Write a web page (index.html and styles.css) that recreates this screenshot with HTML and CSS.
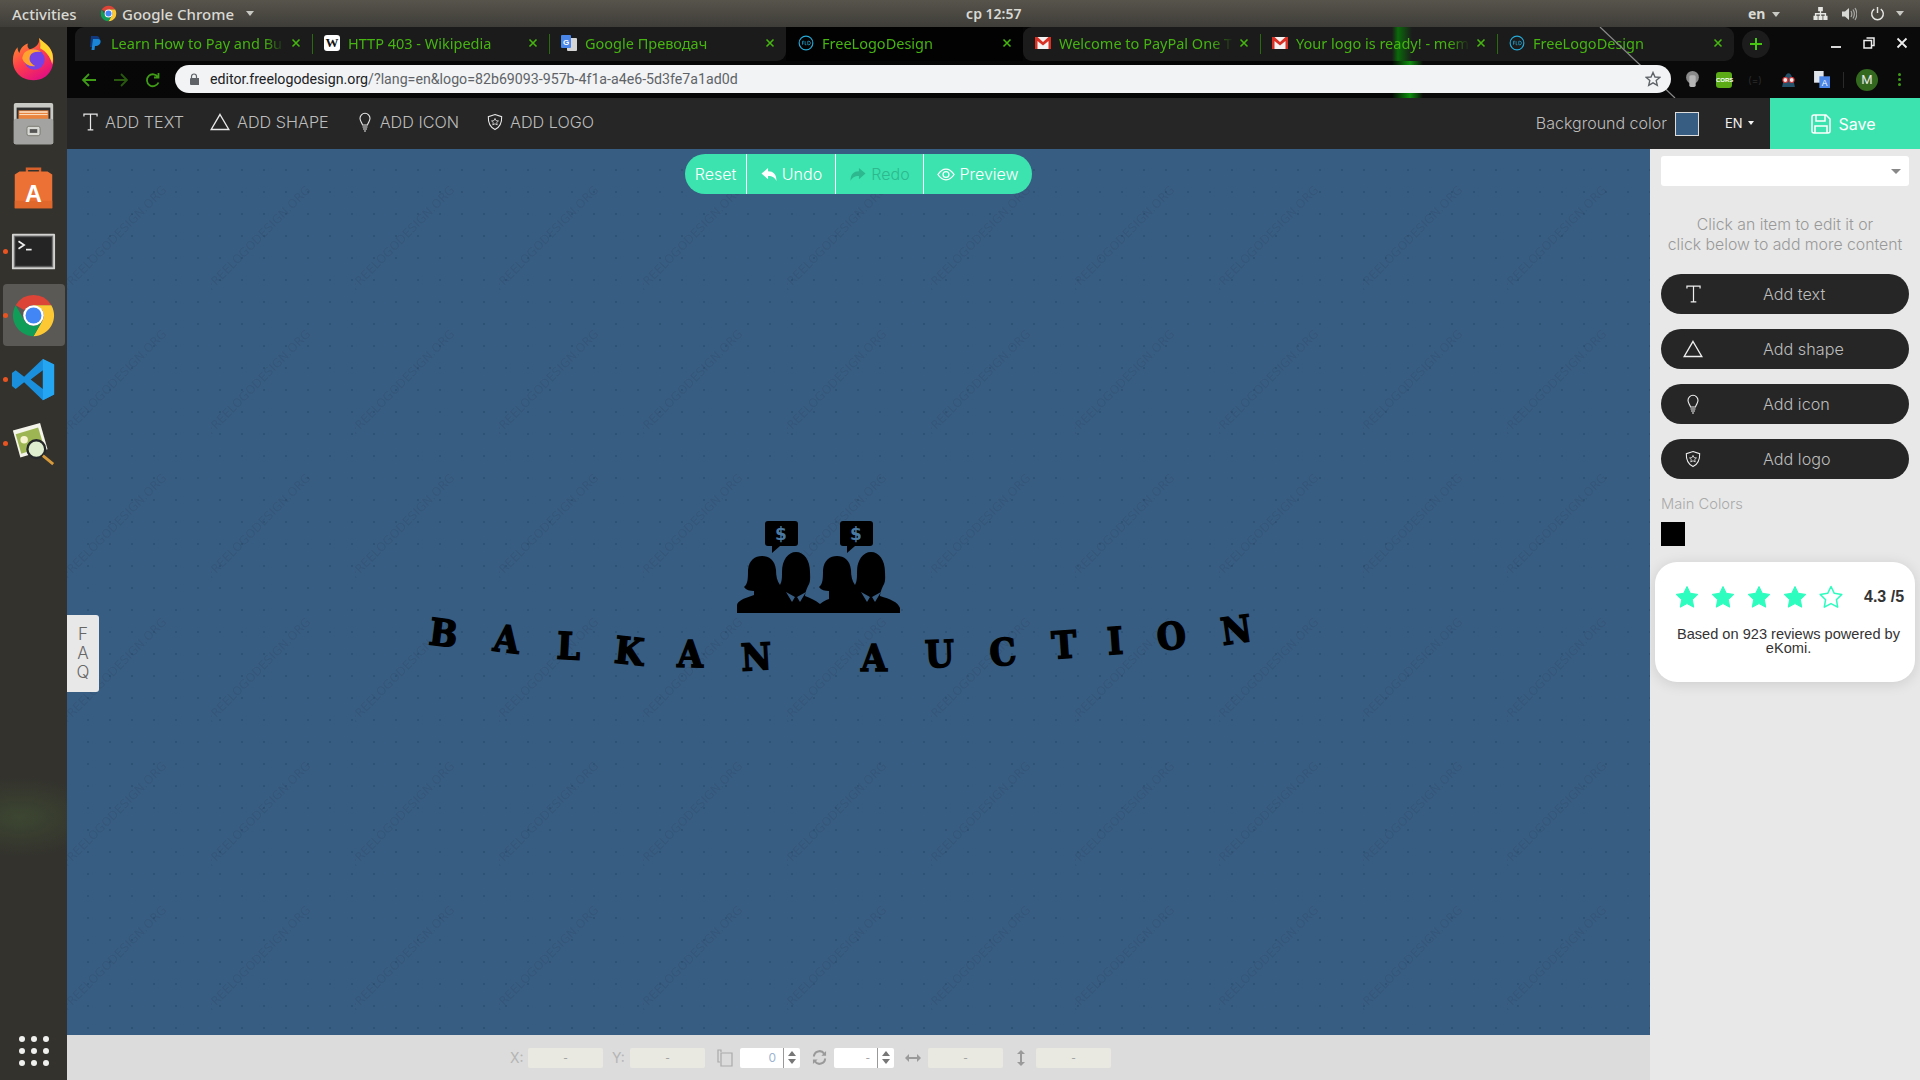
FILE: index.html
```html
<!DOCTYPE html>
<html lang="en">
<head>
<meta charset="utf-8">
<title>FreeLogoDesign</title>
<link rel="stylesheet" href="styles.css">
</head>
<body>
<svg class="sprite" aria-hidden="true">
  <symbol id="chrome" viewBox="0 0 48 48">
    <path fill="#db4437" d="M24 2A22 22 0 0 1 43 13L24 13A11 11 0 0 0 14.500 18.500L5 13A22 22 0 0 1 24 2Z"/>
    <path fill="#fcc934" d="M43 13A22 22 0 0 1 24 46L33.500 29.500A11 11 0 0 0 33.500 18.500L24 13Z"/>
    <path fill="#0f9d58" d="M5 13A22 22 0 0 0 24 46L33.500 29.500A11 11 0 0 1 14.500 29.500Z"/>
    <circle cx="24" cy="24" r="11" fill="#fff"/><circle cx="24" cy="24" r="8.500" fill="#4285f4"/>
  </symbol>
  <symbol id="x" viewBox="0 0 10 10"><path d="M1.500 1.500L8.500 8.500M8.500 1.500L1.500 8.500" stroke="#46b511" stroke-width="1.600" fill="none"/></symbol>
  <symbol id="fld" viewBox="0 0 18 18"><circle cx="9" cy="9" r="7.700" fill="none" stroke="#25a9d6" stroke-width="1.300"/><path d="M5 7v4M5 7h2M5 9h1.500M8 7v4h1.500M11 7v4h1a2 2 0 0 0 0-4Z" fill="none" stroke="#25a9d6" stroke-width=".8"/></symbol>
  <symbol id="gmail" viewBox="0 0 16 16"><rect y="2" width="16" height="12" fill="#f2f2f2"/><path d="M0 2h2.500L8 7l5.500-5H16v12h-2.500V6L8 10.500 2.500 6v8H0Z" fill="#d93025"/></symbol>
  <symbol id="ti-t" viewBox="0 0 16 20"><path d="M1 4V1.500H15V4M8 1.500V18.500M5 18.500H11" fill="none" stroke="currentColor" stroke-width="1.300"/></symbol>
  <symbol id="ti-s" viewBox="0 0 20 18"><path d="M10 1.500L18.800 16.500H1.200Z" fill="none" stroke="currentColor" stroke-width="1.400"/></symbol>
  <symbol id="ti-b" viewBox="0 0 12 20"><path d="M3.500 13C3 10.500 1 9.500 1 6.300A5 5 0 0 1 11 6.300C11 9.500 9 10.500 8.500 13ZM3.500 15H8.500M4 17H8M5 19H7" fill="none" stroke="currentColor" stroke-width="1.100"/></symbol>
  <symbol id="ti-l" viewBox="0 0 18 20"><path d="M9 1.500L16.500 4C16.800 11 14 16 9 18.500C4 16 1.200 11 1.500 4Z" fill="none" stroke="currentColor" stroke-width="1.200"/><path d="M9 6l1.200 2.500 2.700.3-2 1.800.6 2.700L9 12l-2.500 1.300.6-2.700-2-1.800 2.700-.3Z" fill="none" stroke="currentColor" stroke-width=".9"/></symbol>
  <symbol id="star" viewBox="0 0 26 26"><path d="M13 2.500L16.300 9.300 23.800 10.400 18.400 15.700 19.700 23.200 13 19.600 6.300 23.200 7.600 15.700 2.200 10.400 9.700 9.300Z" stroke-linejoin="round"/></symbol>
</svg>

<header class="topbar">
  <span class="activities">Activities</span>
  <span class="appmenu"><svg class="ic16" aria-hidden="true"><use href="#chrome"/></svg>Google Chrome<i class="caret"></i></span>
  <span class="clock">ср 12:57</span>
  <span class="status">
    <span class="lang">en<i class="caret"></i></span>
    <svg class="net" viewBox="0 0 16 16"><path d="M5.500 1h5v4.500h-1.800V7.500H14v3h1.500V15h-4.500v-4.500h1.500V9H8.700v1.500h1.500V15H5.800v-4.500h1.500V9H3.500v1.500H5V15H.5v-4.500H2v-3h5.300V5.500H5.500Z" fill="#e6e6e3"/></svg>
    <svg class="vol" viewBox="0 0 16 16"><path d="M1 5.500h3L8 2v12L4 10.500H1Z" fill="#d8d8d5"/><path d="M10 5c1 1.800 1 4.200 0 6M12 3.500c1.700 2.800 1.700 6.200 0 9M14 2c2.300 3.700 2.300 8.300 0 12" stroke="#a8a8a5" stroke-width="1.200" fill="none"/></svg>
    <svg class="pow" viewBox="0 0 16 16"><path d="M8 1v6.500M4.500 3.300a6.200 6.200 0 1 0 7 0" stroke="#e6e6e3" stroke-width="1.500" fill="none"/></svg>
    <i class="caret last"></i>
  </span>
</header>

<div class="desktop">
  <nav class="dock">
    <div class="dock-item">
      <svg class="dock-ic" viewBox="0 0 48 48">
        <defs><linearGradient id="ffg" x1="0" y1="0" x2=".6" y2="1"><stop offset="0" stop-color="#ffa126"/><stop offset=".55" stop-color="#ff3f4a"/><stop offset="1" stop-color="#e3127e"/></linearGradient></defs>
        <path d="M30 1c3 4 11 7 14 16 4 12-2 29-20 29C10 46 2 36 2 25c0-6 2-11 5-14 0 3 1 5 2 6 1-5 5-9 9-10-1 3 0 5 2 6 5-1 11-5 10-12Z" fill="url(#ffg)"/>
        <path d="M30 1c3 4 11 7 14 16 1 4 1 8 0 12-2-8-7-14-13-17 1-4 0-8-1-11Z" fill="#ffd52e"/>
        <circle cx="25" cy="24" r="11" fill="#7542e5"/>
        <path d="M14 17c5-5 14-5 18-1-6-1-10 1-11 3-3 5 0 10 5 12-6 1-12-2-14-8 0-2 1-4 2-6Z" fill="#ffa22f"/>
      </svg>
    </div>
    <div class="dock-item">
      <svg class="dock-ic" viewBox="0 0 48 48">
        <rect x="3" y="2" width="42" height="44" rx="2" fill="#c9c9c6"/>
        <rect x="6" y="7" width="36" height="13" fill="#2f2f2f"/>
        <rect x="8" y="10" width="32" height="10" fill="#e8843e"/><rect x="9" y="11" width="30" height="1.500" fill="#fbe7d2"/><rect x="9" y="14" width="30" height="1" fill="#fbe7d2"/>
        <rect x="3" y="19" width="42" height="27" rx="2" fill="#a3a3a1"/>
        <rect x="17" y="27" width="14" height="10" rx="2" fill="#d8d8d5" stroke="#77776f"/><rect x="20" y="30" width="8" height="4" fill="#555"/>
      </svg>
    </div>
    <div class="dock-item">
      <svg class="dock-ic" viewBox="0 0 48 48">
        <path d="M17 9V4h14v5" fill="none" stroke="#d8602a" stroke-width="2.500"/>
        <path d="M4 10L9 7H39L44 10V46H4Z" fill="#ec7134"/>
        <path d="M4 38H44V46H4Z" fill="#e0682d"/>
        <text x="24" y="39" text-anchor="middle" font-family="Liberation Sans" font-weight="700" font-size="25" fill="#fff">A</text>
      </svg>
    </div>
    <div class="dock-item dot-run">
      <svg class="dock-ic" viewBox="0 0 48 48">
        <rect x="1" y="5" width="46" height="38" rx="1" fill="#d4d4d2"/>
        <rect x="3.500" y="7.500" width="41" height="33" fill="#3c3c3c" stroke="#777" stroke-width="1"/>
        <rect x="5" y="9" width="38" height="30" fill="#242424"/>
        <path d="M8 13L14 17L8 21" fill="none" stroke="#eee" stroke-width="1.800"/><path d="M16 22H22" stroke="#eee" stroke-width="1.800"/>
      </svg>
    </div>
    <div class="dock-item dot-run is-active"><svg class="dock-ic" aria-hidden="true"><use href="#chrome"/></svg></div>
    <div class="dock-item dot-run">
      <svg class="dock-ic" viewBox="0 0 48 48">
        <path d="M34 2L46 8V40L34 46L14 27L5 34L1 31V17L5 14L14 21ZM34 14L21 24L34 34Z" fill="#1a8fdc"/>
        <path d="M34 2L46 8V40L34 46Z" fill="#25a6f2"/>
      </svg>
    </div>
    <div class="dock-item dot-run">
      <svg class="dock-ic" viewBox="0 0 48 48">
        <path d="M2 10L31 2L39 30L10 39Z" fill="#f4f4ea"/>
        <path d="M5 14L29 7L35 27L11 35Z" fill="#9db653"/>
        <circle cx="14" cy="20" r="4" fill="#f7f3d0"/>
        <circle cx="27" cy="30" r="9.500" fill="#dfeecf" stroke="#26292b" stroke-width="2.500"/>
        <path d="M34 37L45 46" stroke="#d79a3b" stroke-width="3"/>
      </svg>
    </div>
    <div class="apps"><i></i><i></i><i></i><i></i><i></i><i></i><i></i><i></i><i></i></div>
  </nav>

  <div class="window">
    <div class="chrome">
      <svg class="chrome-deco" viewBox="0 0 1853 71" preserveAspectRatio="none" aria-hidden="true">
        <path d="M1533 0L1608 71" stroke="#8a8a8a" stroke-width="1.200" fill="none"/>
      </svg>
      <div class="tabs">
        <div class="tab">
          <svg class="fav" viewBox="0 0 16 16"><path d="M4 1h5c3 0 4 2 3.500 4S10 8.500 8 8.500H6.500L6 12H3Z" fill="#12397d"/><path d="M6 4h5c2 0 3 1.500 2.500 3.500S11 11 9 11H8l-.5 4H4.500Z" fill="#1a84d6"/></svg>
          <span class="tab-title">Learn How to Pay and Bu</span><svg class="tab-x"><use href="#x"/></svg>
        </div>
        <div class="tab">
          <span class="fav wiki">W</span>
          <span class="tab-title">HTTP 403 - Wikipedia</span><svg class="tab-x"><use href="#x"/></svg>
        </div>
        <div class="tab">
          <svg class="fav" viewBox="0 0 16 16"><rect x="6" y="3" width="10" height="13" rx="1" fill="#d5d5d5"/><rect width="10" height="13" rx="1" fill="#4a86e8"/><text x="5" y="10" text-anchor="middle" font-size="8" font-weight="700" font-family="Liberation Sans" fill="#fff">G</text></svg>
          <span class="tab-title">Google Преводач</span><svg class="tab-x"><use href="#x"/></svg>
        </div>
        <div class="tab is-current">
          <svg class="fav"><use href="#fld"/></svg>
          <span class="tab-title">FreeLogoDesign</span><svg class="tab-x"><use href="#x"/></svg>
        </div>
        <div class="tab">
          <svg class="fav"><use href="#gmail"/></svg>
          <span class="tab-title">Welcome to PayPal One T</span><svg class="tab-x"><use href="#x"/></svg>
        </div>
        <div class="tab">
          <svg class="fav"><use href="#gmail"/></svg>
          <span class="tab-title">Your logo is ready! - meme</span><svg class="tab-x"><use href="#x"/></svg>
        </div>
        <div class="tab">
          <svg class="fav"><use href="#fld"/></svg>
          <span class="tab-title">FreeLogoDesign</span><svg class="tab-x"><use href="#x"/></svg>
        </div>
        <div class="newtab"><svg viewBox="0 0 14 14"><path d="M7 1v12M1 7h12" stroke="#46c511" stroke-width="2"/></svg></div>
        <div class="winctl">
          <svg viewBox="0 0 12 12"><path d="M1 10h10" stroke="#eee" stroke-width="1.800"/></svg>
          <svg viewBox="0 0 12 12"><path d="M3.500 1h7.500v7.500H8.500M1 3.500h7.500V11H1Z" fill="none" stroke="#eee" stroke-width="1.500"/></svg>
          <svg viewBox="0 0 12 12"><path d="M1.500 1.500l9 9M10.500 1.500l-9 9" stroke="#eee" stroke-width="1.800"/></svg>
        </div>
      </div>
      <div class="toolbar">
        <svg class="nav" viewBox="0 0 16 16"><path d="M15 8H2M8 2L2 8l6 6" fill="none" stroke="#3f9b16" stroke-width="1.800"/></svg>
        <svg class="nav" viewBox="0 0 16 16"><path d="M1 8h13M8 2l6 6-6 6" fill="none" stroke="#28590f" stroke-width="1.800"/></svg>
        <svg class="nav" viewBox="0 0 16 16"><path d="M13.500 10.500A6 6 0 1 1 13 5M13.500 1v4.500H9" fill="none" stroke="#3f9b16" stroke-width="1.800"/></svg>
        <div class="omnibox">
          <svg class="lock" viewBox="0 0 10 12"><path d="M2.500 5V3.500a2.500 2.500 0 0 1 5 0V5" fill="none" stroke="#5f6368" stroke-width="1.200"/><rect y="5" width="10" height="7" rx="1" x="1" fill="#5f6368"/></svg>
          <span class="url"><b>editor.freelogodesign.org</b>/?lang=en&amp;logo=82b69093-957b-4f1a-a4e6-5d3fe7a1ad0d</span>
          <svg class="urlstar" viewBox="0 0 16 16"><path d="M8 1.500L10 6 14.800 6.400 11.200 9.600 12.300 14.400 8 11.900 3.700 14.400 4.800 9.600 1.200 6.400 6 6Z" fill="none" stroke="#5f6368" stroke-width="1.400"/></svg>
        </div>
        <div class="exts">
          <svg viewBox="0 0 16 16"><circle cx="8" cy="6" r="6" fill="#8a8a8a"/><rect x="5" y="4" width="6" height="11" rx="1.500" fill="#b5b5b5"/></svg>
          <span class="cors">CORS</span>
          <span class="ext-eq">(=)</span>
          <svg viewBox="0 0 16 16"><path d="M2 15C3 9 5 2 8 2s5 7 6 13Z" fill="#26516a"/><circle cx="5" cy="8.500" r="2.300" fill="#eee" stroke="#d33" stroke-width="1"/><circle cx="11" cy="8.500" r="2.300" fill="#eee" stroke="#d33" stroke-width="1"/></svg>
          <svg viewBox="0 0 16 16"><rect x="1" width="9" height="11" fill="#dfe3ea"/><rect x="6" y="5" width="10" height="11" fill="#4a86e8"/><text x="11" y="14" text-anchor="middle" font-size="8" font-family="Liberation Sans" fill="#fff">A</text></svg>
          <i class="ext-sep"></i>
          <span class="avatar">M</span>
          <span class="kebab"><i></i><i></i><i></i></span>
        </div>
      </div>
    </div>

    <div class="appbar">
      <a class="tool t1"><svg class="tool-ic w15"><use href="#ti-t"/></svg>ADD TEXT</a>
      <a class="tool t2"><svg class="tool-ic w20"><use href="#ti-s"/></svg>ADD SHAPE</a>
      <a class="tool t3"><svg class="tool-ic w12"><use href="#ti-b"/></svg>ADD ICON</a>
      <a class="tool t4"><svg class="tool-ic w16"><use href="#ti-l"/></svg>ADD LOGO</a>
      <span class="bgcolor">Background color</span>
      <span class="swatch"></span>
      <span class="lang-en">EN<i class="caret small"></i></span>
      <button class="save"><svg viewBox="0 0 20 20"><path d="M1 3a2 2 0 0 1 2-2h12l4 4v12a2 2 0 0 1-2 2H3a2 2 0 0 1-2-2ZM5 1v6h9V1M4 19v-7h12v7" fill="none" stroke="#fff" stroke-width="1.500"/></svg>Save</button>
    </div>

    <div class="work">
      <div class="center">
        <main class="canvas">
          <svg class="wm" aria-hidden="true">
            <defs><pattern id="wmp" width="144" height="144" patternUnits="userSpaceOnUse">
              <text class="wm-t" transform="translate(0 142) rotate(-45)">FREELOGODESIGN.ORG</text>
            </pattern></defs>
            <rect width="100%" height="100%" fill="url(#wmp)"/>
          </svg>
          <div class="pill">
            <button class="p-btn p-reset">Reset</button>
            <button class="p-btn p-undo"><svg viewBox="0 0 18 16"><path d="M1 7L8 1V4.500C14 4.500 17 8 17 15C15 11 13 9.500 8 9.500V13Z" fill="#fff"/></svg>Undo</button>
            <button class="p-btn p-redo"><svg viewBox="0 0 18 16"><path d="M17 7L10 1V4.500C4 4.500 1 8 1 15C3 11 5 9.500 10 9.500V13Z" fill="#2db88f"/></svg>Redo</button>
            <button class="p-btn p-prev"><svg viewBox="0 0 20 14"><path d="M1 7C4 2.500 7 1 10 1s6 1.500 9 6c-3 4.500-6 6-9 6S4 11.500 1 7Z" fill="none" stroke="#fff" stroke-width="1.400"/><circle cx="10" cy="7" r="3.300" fill="none" stroke="#fff" stroke-width="1.400"/></svg>Preview</button>
          </div>
          <svg class="logo" viewBox="67 149 1583 886" aria-label="Balkan Auction logo">
            <g transform="translate(720 510)">
              <path d="M45 14a3 3 0 0 1 3-3H75a3 3 0 0 1 3 3V33a3 3 0 0 1-3 3H60L52 43V36H48a3 3 0 0 1-3-3Z"/>
              <path d="M120 14a3 3 0 0 1 3-3H150a3 3 0 0 1 3 3V33a3 3 0 0 1-3 3H135L127 43V36H123a3 3 0 0 1-3-3Z"/>
              <path d="M17 103V95C18 91 22 89 34 85V81C30 81 26 80 24 77C28 74 28 68 28 60C29 50 35 46 42 46C49 46 55 50 56 60C56 66 57 71 60 75C62 71 62 68 62 62C62 50 68 42 76 42C84 42 90 50 90 62C90 66 91 72 88 76C86 80 85 84 85 86C90 88 95 90 100 94C104 91 106 90 109 89V81C105 81 101 80 99 77C103 74 103 68 103 60C104 50 110 46 117 46C124 46 130 50 131 60C131 66 132 71 135 75C137 71 137 68 137 62C137 50 143 42 151 42C159 42 165 50 165 62C165 66 166 72 163 76C161 80 160 84 160 86C170 89 178 92 180 98V103Z"/>
              <path class="shirt" d="M66 82L72 92L75 87ZM86 82L80 92L77 87ZM141 82L147 92L150 87ZM161 82L155 92L152 87Z"/>
              <text class="dollar" x="61" y="30">$</text>
              <text class="dollar" x="136" y="30">$</text>
            </g>
            <g class="letters">
              <text transform="translate(442 646) rotate(7)">B</text>
              <text transform="translate(505 652) rotate(7)">A</text>
              <text transform="translate(568 659) rotate(3)">L</text>
              <text transform="translate(628 664) rotate(6)">K</text>
              <text transform="translate(690 667) rotate(1)">A</text>
              <text transform="translate(757 670) rotate(-3)">N</text>
              <text transform="translate(874 671) rotate(0)">A</text>
              <text transform="translate(940 667) rotate(-2)">U</text>
              <text transform="translate(1004 665) rotate(-5)">C</text>
              <text transform="translate(1065 658) rotate(-4)">T</text>
              <text transform="translate(1116 654) rotate(-4)">I</text>
              <text transform="translate(1173 649) rotate(-7)">O</text>
              <text transform="translate(1238 643) rotate(-8)">N</text>
            </g>
          </svg>
          <div class="faq"><span>F</span><span>A</span><span>Q</span></div>
        </main>
        <div class="coords">
          <label class="c-label">X:</label><span class="c-field">-</span>
          <label class="c-label c-y">Y:</label><span class="c-field">-</span>
          <svg class="c-ic c-copy" viewBox="0 0 16 18"><path d="M4 3V1H1V13H3M4 4H15V17H4Z" fill="none" stroke="#aaa" stroke-width="1.200"/></svg>
          <span class="c-num"><span class="c-val blue">0</span><span class="c-spin"><i class="up"></i><i class="down"></i></span></span>
          <svg class="c-ic c-rot" viewBox="0 0 16 16"><path d="M2 7A6 6 0 0 1 13 4M14 9A6 6 0 0 1 3 12" fill="none" stroke="#9a9a9a" stroke-width="2.200"/><path d="M10 6h5V1ZM6 10H1v5Z" fill="#9a9a9a"/></svg>
          <span class="c-num"><span class="c-val">-</span><span class="c-spin"><i class="up"></i><i class="down"></i></span></span>
          <svg class="c-ic c-w" viewBox="0 0 16 8"><path d="M0 4L4 0V3H12V0L16 4L12 8V5H4V8Z" fill="#9a9a9a"/></svg>
          <span class="c-field">-</span>
          <svg class="c-ic c-h" viewBox="0 0 8 16"><path d="M4 0L8 4H5V12H8L4 16L0 12H3V4H0Z" fill="#9a9a9a"/></svg>
          <span class="c-field">-</span>
        </div>
      </div>

      <aside class="panel">
        <div class="select"><i class="sel-caret"></i></div>
        <p class="hint">Click an item to edit it or<br>click below to add more content</p>
        <button class="add"><svg class="add-ic w15"><use href="#ti-t"/></svg>Add text</button>
        <button class="add"><svg class="add-ic w20"><use href="#ti-s"/></svg>Add shape</button>
        <button class="add"><svg class="add-ic w12"><use href="#ti-b"/></svg>Add icon</button>
        <button class="add"><svg class="add-ic w16"><use href="#ti-l"/></svg>Add logo</button>
        <div class="mc-title">Main Colors</div>
        <div class="mc-swatch"></div>
        <section class="review">
          <div class="rv-row">
            <svg class="st"><use href="#star"/></svg>
            <svg class="st"><use href="#star"/></svg>
            <svg class="st"><use href="#star"/></svg>
            <svg class="st"><use href="#star"/></svg>
            <svg class="st empty"><use href="#star"/></svg>
            <strong class="rv-score">4.3 /5</strong>
          </div>
          <p class="rv-text">Based on 923 reviews powered by eKomi.</p>
        </section>
      </aside>
    </div>
  </div>
</div>
</body>
</html>
```
FILE: styles.css
```css
* { box-sizing: border-box; }
html, body { margin: 0; height: 100%; }
body { width: 1920px; height: 1080px; overflow: hidden; display: flex; flex-direction: column; font-family: "Inter", "Liberation Sans", sans-serif; background: #2f2f2a; }
.sprite { position: absolute; width: 0; height: 0; }
button { border: 0; font: inherit; padding: 0; cursor: pointer; }
p { margin: 0; }

/* GNOME top bar */
.topbar { height: 27px; flex: none; display: flex; align-items: center; position: relative; background: linear-gradient(#57544c, #3f3d38); color: #d9d9d4; font: 500 15px "Noto Sans", sans-serif; padding-left: 12px; }
.activities { width: 88px; }
.appmenu { display: flex; align-items: center; gap: 5px; }
.ic16 { width: 17px; height: 17px; }
.caret { display: inline-block; width: 0; height: 0; border: 4.500px solid transparent; border-top: 5px solid #c9c9c4; border-bottom: 0; margin-left: 7px; }
.clock { position: absolute; left: 966px; font-size: 14px; font-weight: 600; }
.status { position: absolute; left: 1748px; top: 0; height: 27px; display: flex; align-items: center; }
.lang { width: 65px; font-size: 14px; font-weight: 700; }
.lang .caret { margin-left: 7px; vertical-align: 2px; }
.net { width: 15px; height: 15px; margin-right: 13px; }
.vol { width: 16px; height: 16px; margin-right: 13px; }
.pow { width: 15px; height: 15px; margin-right: 11px; }
.caret.last { margin-left: 0; }

.desktop { flex: 1; display: flex; min-height: 0; }

/* Dock */
.dock { width: 67px; flex: none; display: flex; flex-direction: column; align-items: center; background: radial-gradient(ellipse 80px 40px at 20px 790px, #3c4631, transparent), #33322d; }
.dock-item { width: 62px; height: 64px; flex: none; display: flex; align-items: center; justify-content: center; position: relative; border-radius: 4px; }
.dock-ic { width: 45px; height: 45px; }
.dot-run::before { content: ""; position: absolute; left: 0; top: 50%; width: 5px; height: 5px; margin: -2.500px 0 0 0; border-radius: 50%; background: #e95420; }
.is-active { background: #5a5955; height: 62px; margin: 1px 0; }
.apps { margin-top: auto; margin-bottom: 14px; display: grid; grid-template-columns: repeat(3, 6px); gap: 6px; }
.apps i { width: 6px; height: 6px; border-radius: 50%; background: #f0f0ee; }

.window { flex: 1; min-width: 0; display: flex; flex-direction: column; }

/* Browser chrome */
.chrome { flex: none; height: 71px; position: relative; background: linear-gradient(90deg, #070707 0, #050505 1325px, #0b7a0b 1340px, #0e8f0e 1343px, #0a0a0a 1356px, #0a0a0a 100%); }
.chrome-deco { position: absolute; inset: 0; width: 100%; height: 100%; z-index: 1; pointer-events: none; }
.tabs { height: 34px; display: flex; padding-left: 8px; position: relative; }
.tab { width: 237px; flex: none; display: flex; align-items: center; padding: 0 11px 2px 12px; background: #1b1b1b; color: #46b511; font: 14.500px "Noto Sans", sans-serif; position: relative; }
.tab:first-child { border-radius: 9px 0 0 0; }
.tab + .tab::before { content: ""; position: absolute; left: 0; top: 7px; bottom: 7px; width: 1px; background: #2b6a12; }
.tab:nth-child(3) { border-radius: 0 0 9px 0; }
.is-current { background: #020202; }
.is-current::before, .is-current + .tab::before { display: none; }
.tab:nth-child(5) { border-radius: 9px 0 0 9px; }
.tab:nth-child(6) { background: linear-gradient(90deg, #1b1b1b 132px, #0a6a0a 138px, #1b1b1b 152px); }
.tab:nth-child(7) { border-radius: 0 9px 9px 0; }
.fav { width: 16px; height: 16px; flex: none; margin-right: 8px; }
.wiki { background: #fff; color: #111; border-radius: 3px; font: 700 13px/16px "Liberation Serif", serif; text-align: center; }
.tab-title { flex: 1; min-width: 0; white-space: nowrap; -webkit-mask-image: linear-gradient(90deg, #000 88%, transparent 100%); mask-image: linear-gradient(90deg, #000 88%, transparent 100%); }
.tab-x { width: 10px; height: 10px; flex: none; margin-left: 6px; }
.newtab { width: 28px; height: 28px; margin: 3px 0 0 8px; border-radius: 50%; background: #1c1c1c; display: flex; align-items: center; justify-content: center; }
.newtab svg { width: 14px; height: 14px; }
.winctl { position: absolute; left: 1763px; top: 10px; display: flex; gap: 21px; }
.winctl svg { width: 12px; height: 12px; }

.toolbar { height: 37px; display: flex; align-items: center; position: relative; padding-left: 14px; }
.nav { width: 16px; height: 16px; margin-right: 16px; flex: none; }
.omnibox { position: absolute; left: 108px; top: 4px; width: 1496px; height: 28px; border-radius: 14px; background: #f1f3f4; display: flex; align-items: center; padding-left: 14px; z-index: 2; }
.lock { width: 10px; height: 12px; margin-right: 11px; }
.url { font: 14.200px "Roboto", sans-serif; color: #5f6368; white-space: nowrap; }
.url b { font-weight: 400; color: #202124; }
.urlstar { position: absolute; right: 10px; top: 6px; width: 16px; height: 16px; }
.exts { position: absolute; left: 1617px; top: 0; height: 37px; display: flex; align-items: center; z-index: 2; }
.exts > svg { width: 17px; height: 17px; }
.exts > svg:nth-of-type(1) { margin-right: 15px; }
.cors { width: 16px; height: 16px; margin-right: 16px; border-radius: 3px; background: #5bab16; color: #fff; font: 700 6px/16px "Liberation Sans", sans-serif; text-align: center; }
.ext-eq { width: 16px; margin-right: 16px; font-size: 10px; color: #2a2a2a; }
.exts > svg:nth-of-type(2) { margin-right: 16px; }
.ext-sep { width: 1px; height: 16px; background: #2a2a2a; margin: 0 12px 0 13px; }
.avatar { width: 22px; height: 22px; border-radius: 50%; background: #33691e; color: #e6e6e6; font: 13px/22px "Roboto", sans-serif; text-align: center; }
.kebab { margin-left: 20px; display: grid; gap: 2px; }
.kebab i { width: 3px; height: 3px; border-radius: 50%; background: #3f9b16; }

/* App bar */
.appbar { height: 51px; flex: none; background: #262626; display: flex; align-items: center; color: #bdbdbd; font-size: 16.200px; font-weight: 300; }
.tool { display: flex; align-items: center; white-space: nowrap; margin-top: -3px; }
.t1 { margin-left: 16px; }
.t2 { margin-left: 26px; }
.t3 { margin-left: 30px; }
.t4 { margin-left: 28px; }
.tool-ic { height: 20px; color: #e8e8e8; margin-right: 7px; flex: none; }
.t3 .tool-ic { margin-right: 9px; }
.w15 { width: 15px; }
.w20 { width: 20px; }
.w12 { width: 12px; }
.w16 { width: 16px; }
.bgcolor { margin-left: auto; font-size: 16px; margin-top: -2px; }
.swatch { width: 24px; height: 24px; margin: 0 26px 0 8px; background: #375d82; border: 1px solid #ddd; }
.lang-en { color: #f2f2f2; font-size: 13px; width: 45px; font-weight: 400; margin-top: -2px; }
.caret.small { border-width: 4px 3px 0; border-top-color: #f2f2f2; margin-left: 5px; vertical-align: 3px; }
.save { width: 150px; height: 51px; background: #3ce3ae; color: #fff; display: flex; align-items: center; justify-content: center; gap: 7px; font-size: 16px; font-weight: 400; padding-right: 3px; }
.save svg { width: 20px; height: 20px; }

/* Workspace */
.work { flex: 1; display: flex; min-height: 0; }
.center { flex: 1; min-width: 0; display: flex; flex-direction: column; }
.canvas { flex: 1; position: relative; display: flex; flex-direction: column; align-items: center; padding-top: 5px; background-color: #375d82; background-image: radial-gradient(circle at 21px 21px, #2f5375 0, #2f5375 1px, transparent 1.600px); background-size: 22px 22px; overflow: hidden; }
.wm { position: absolute; inset: 0; width: 100%; height: 100%; }
.wm-t { font: 12px "DejaVu Sans", sans-serif; fill: rgba(20, 40, 60, .13); }
.logo { position: absolute; inset: 0; width: 1583px; height: 886px; }
.shirt { fill: #375d82; }
.dollar { font: 700 17px "DejaVu Sans", sans-serif; fill: #4a7aa3; text-anchor: middle; }
.letters text { font: 700 37px "DejaVu Serif Condensed", "DejaVu Serif", serif; text-anchor: middle; fill: #000; stroke: #000; stroke-width: 1.500px; }

.pill { display: flex; height: 40px; border-radius: 20px; overflow: hidden; position: relative; z-index: 2; background: #3ce3ae; color: #fff; font-size: 16px; font-weight: 300; }
.p-btn { background: none; color: inherit; display: flex; align-items: center; justify-content: center; gap: 4px; height: 40px; }
.p-btn + .p-btn { border-left: 1px solid #fff; }
.p-btn svg { width: 18px; height: 15px; }
.p-reset { width: 61px; }
.p-undo { width: 89px; }
.p-redo { width: 88px; color: #2db88f; }
.p-prev { width: 109px; }

.faq { position: absolute; left: 0; top: 466px; width: 32px; height: 77px; background: #e8e8e8; border-radius: 0 3px 3px 0; padding-top: 10px; display: flex; flex-direction: column; align-items: center; color: #666; font-size: 17px; line-height: 19px; font-weight: 300; }

/* Bottom coords bar */
.coords { height: 45px; flex: none; background: #dcdcdc; display: flex; align-items: center; padding-left: 443px; color: #b5b5b5; font-size: 14px; }
.c-label { width: 18px; }
.c-y { margin-left: 9px; }
.c-field { width: 75px; height: 20px; background: #e9e9e2; border-radius: 2px; font-size: 10px; line-height: 20px; text-align: center; color: #999; }
.c-ic { flex: none; }
.c-copy { width: 16px; height: 18px; margin: 0 7px 0 12px; }
.c-num { width: 60px; height: 20px; background: #fff; border-radius: 2px; display: flex; }
.c-val { flex: 1; text-align: right; padding-right: 7px; font-size: 10px; line-height: 20px; color: #999; }
.c-val.blue { color: #9db4d0; font-size: 12px; }
.c-spin { width: 17px; border-left: 1px solid #999; display: flex; flex-direction: column; align-items: center; justify-content: space-around; padding: 2px 0; }
.c-spin i { width: 0; height: 0; border-left: 4px solid transparent; border-right: 4px solid transparent; }
.c-spin .up { border-bottom: 5px solid #777; }
.c-spin .down { border-top: 5px solid #777; }
.c-rot { width: 15px; height: 15px; margin: 0 7px 0 12px; }
.c-w { width: 16px; height: 8px; margin: 0 7px 0 11px; }
.c-h { width: 8px; height: 16px; margin: 0 11px 0 14px; }

/* Right panel */
.panel { width: 270px; flex: none; background: #e8e8e8; display: flex; flex-direction: column; padding: 7px 11px 0; }
.select { height: 30px; background: #fff; border-radius: 3px; position: relative; flex: none; }
.sel-caret { position: absolute; right: 8px; top: 13px; width: 0; height: 0; border-left: 5px solid transparent; border-right: 5px solid transparent; border-top: 5px solid #888; }
.hint { margin-top: 29px; text-align: center; color: #999; font-size: 15.800px; line-height: 20px; font-weight: 300; white-space: nowrap; }
.add { height: 40px; flex: none; margin-top: 15px; background: #262626; border-radius: 20px; color: #bdbdbd; font-size: 16.200px; font-weight: 300; display: flex; align-items: center; position: relative; padding-left: 102px; }
.hint + .add { margin-top: 19px; }
.add-ic { position: absolute; left: 25px; top: 10px; height: 20px; color: #eee; }
.w20.add-ic { left: 22px; }
.w12.add-ic { left: 26px; }
.w16.add-ic { left: 24px; }
.mc-title { margin-top: 16px; color: #aaa; font-size: 14.700px; font-weight: 300; line-height: 18px; }
.mc-swatch { width: 24px; height: 24px; margin-top: 9px; background: #000; flex: none; }
.review { height: 120px; width: 260px; flex: none; margin: 16px 0 0 -6px; background: #fff; border-radius: 22px; box-shadow: 0 2px 14px rgba(0, 0, 0, .12); padding: 22px 6px 0 19px; font-family: "Liberation Sans", sans-serif; color: #333; }
.rv-row { display: flex; align-items: center; height: 26px; }
.st { width: 26px; height: 26px; margin-right: 10px; fill: #2dfdbe; stroke: #2dfdbe; stroke-width: 1; }
.st.empty { fill: none; stroke-width: 1.500; }
.rv-score { margin-left: 10px; font-size: 16px; white-space: nowrap; }
.rv-text { margin: 17px -4px 0 -10px; font-size: 14.600px; line-height: 14px; text-align: center; }
```
